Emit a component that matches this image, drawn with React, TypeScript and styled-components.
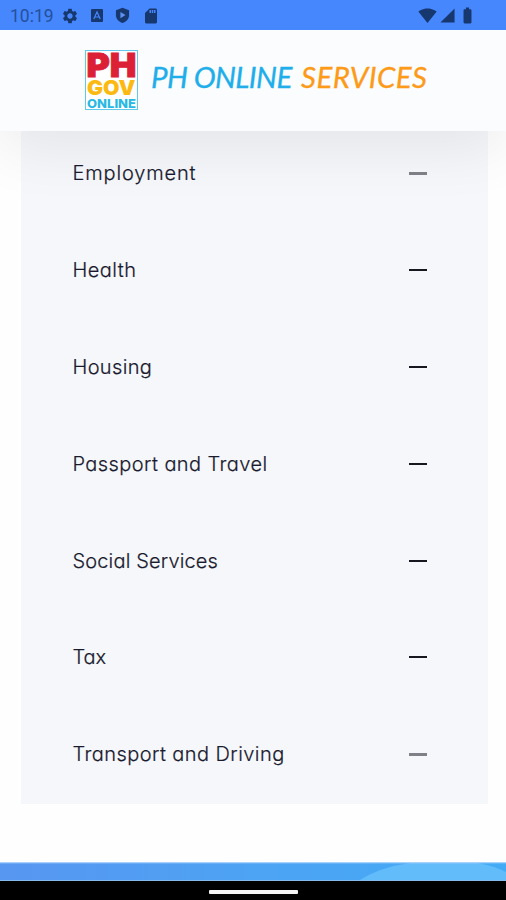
import React from "react";
import styled, { createGlobalStyle } from "styled-components";
import {
  MdSettings,
  MdSdCard,
  MdSignalCellular4Bar,
  MdBatteryFull,
  MdSignalWifi4Bar,
} from "react-icons/md";

const GlobalStyle = createGlobalStyle`
  * { box-sizing: border-box; }
  body { margin: 0; background: #fff; }
`;

const Screen = styled.div`
  display: flex;
  flex-direction: column;
  width: 506px;
  height: 900px;
  overflow: hidden;
  background: #fefefe;
  font-family: Inter, "Liberation Sans", sans-serif;
`;

const StatusBar = styled.div`
  display: flex;
  flex: none;
  align-items: center;
  justify-content: space-between;
  height: 30px;
  padding: 1px 29px 0 10px;
  background: #4687fe;
  color: #17376f;
  z-index: 2;
`;

const StatusGroup = styled.div<{ $gap: number }>`
  display: flex;
  align-items: center;
  gap: ${(p) => p.$gap}px;
`;

const Clock = styled.span`
  width: 44px;
  margin-right: -5px;
  font: 400 17.5px/20px Roboto, sans-serif;
  color: #24509c;
  white-space: nowrap;
`;

const Header = styled.header`
  display: flex;
  flex: none;
  height: 101px;
  padding: 20px 0 0 84.5px;
  background: #fbfcfe;
  box-shadow: 0 18px 60px rgba(0, 0, 0, 0.075);
  z-index: 1;
`;

const Logo = styled.div`
  width: 53px;
  height: 60px;
  border: 1px solid #62c8ec;
  background: #fff;
`;

const LogoSvg = styled.svg`
  display: block;
  width: 51px;
  height: 58px;
  overflow: visible;
`;

const Title = styled.h1`
  display: flex;
  gap: 9px;
  margin: 7px 0 0 13.5px;
  font-family: Lato, sans-serif;
  font-size: 29.5px;
  line-height: 40px;
  font-style: italic;
  font-weight: 400;
  white-space: nowrap;
`;

const TitleWord = styled.span<{ $color: string; $width: number; $spacing: number }>`
  width: ${(p) => p.$width}px;
  color: ${(p) => p.$color};
  -webkit-text-stroke: 0.3px ${(p) => p.$color};
  letter-spacing: ${(p) => p.$spacing}px;
`;

const Main = styled.main`
  flex: 1;
  overflow: hidden;
`;

const ServiceList = styled.ul`
  width: 467px;
  height: 678.5px;
  margin: -6px 0 0 20.5px;
  padding: 0;
  list-style: none;
  background: #f5f7fb;
`;

const ServiceRow = styled.li`
  display: flex;
  align-items: center;
  justify-content: space-between;
  height: 96.8px;
  padding: 0 60.5px 0 52px;
`;

const Label = styled.span<{ $spacing: number }>`
  font-size: 20px;
  line-height: 30px;
  font-weight: 300;
  font-feature-settings: "cv11";
  -webkit-text-stroke: 0.2px #1a1a2e;
  letter-spacing: ${(p) => p.$spacing}px;
  color: #1a1a2e;
  white-space: nowrap;
`;

const Minus = styled.span<{ $soft?: boolean }>`
  width: 18px;
  height: ${(p) => (p.$soft ? 3 : 2)}px;
  background: ${(p) => (p.$soft ? "#808188" : "#17171f")};
`;

const FooterArt = styled.svg`
  display: block;
  flex: none;
  width: 506px;
  height: 19px;
`;

const NavBar = styled.div`
  display: flex;
  flex: none;
  align-items: center;
  justify-content: center;
  height: 19px;
  background: #000;
`;

const NavHandle = styled.div`
  width: 89px;
  height: 4px;
  margin-top: 2px;
  border-radius: 1px;
  background: #f4f4f4;
`;

const services = [
  { name: "Employment", spacing: 0.85, soft: true },
  { name: "Health", spacing: 0.45 },
  { name: "Housing", spacing: 0.35 },
  { name: "Passport and Travel", spacing: 0.42 },
  { name: "Social Services", spacing: 0.15 },
  { name: "Tax", spacing: -0.1 },
  { name: "Transport and Driving", spacing: 0.43, soft: true },
];

const LetterBadge = () => (
  <svg width="12" height="13" viewBox="0 0 12 13">
    <rect width="12" height="13" rx="1" fill="currentColor" />
    <path d="M2.8 10 6 3l3.2 7M4 8h4" fill="none" stroke="#4687fe" strokeWidth="1.2" />
  </svg>
);

const ShieldPlay = () => (
  <svg width="15" height="17" viewBox="0 0 16 17">
    <path d="M8 .3 1 2.8v5.4c0 3.9 2.9 6.9 7 8.3 4.1-1.4 7-4.4 7-8.3V2.8z" fill="currentColor" />
    <path d="M5.8 4.7v6.6L11.2 8z" fill="#5c93f4" />
  </svg>
);

export default function App() {
  return (
    <>
      <GlobalStyle />
      <Screen>
        <StatusBar>
          <StatusGroup $gap={12}>
            <Clock>10:19</Clock>
            <MdSettings size={18} />
            <LetterBadge />
            <ShieldPlay />
            <MdSdCard size={18} />
          </StatusGroup>
          <StatusGroup $gap={2}>
            <MdSignalWifi4Bar size={19} />
            <MdSignalCellular4Bar size={17} />
            <MdBatteryFull size={19} />
          </StatusGroup>
        </StatusBar>
        <Header>
          <Logo>
            <LogoSvg viewBox="0 0 51 58" fontFamily="Inter, sans-serif">
              <text x="0.5" y="26" fontSize="33" fontWeight="900" fill="#dc2036" stroke="#dc2036" strokeWidth="0.9" textLength="50" lengthAdjust="spacingAndGlyphs">PH</text>
              <text x="1" y="44.3" fontSize="20.5" fontWeight="900" fill="#fcb912" textLength="48.5" lengthAdjust="spacingAndGlyphs">GOV</text>
              <text x="1" y="56.5" fontSize="12" fontWeight="800" fill="#29b8e4" textLength="49" lengthAdjust="spacingAndGlyphs">ONLINE</text>
            </LogoSvg>
          </Logo>
          <Title>
            <TitleWord $color="#20aeeb" $width={141} $spacing={-0.6}>PH ONLINE</TitleWord>
            <TitleWord $color="#fd9a18" $width={128} $spacing={0.4}>SERVICES</TitleWord>
          </Title>
        </Header>
        <Main>
          <ServiceList>
            {services.map((s) => (
              <ServiceRow key={s.name}>
                <Label $spacing={s.spacing}>{s.name}</Label>
                <Minus $soft={s.soft} />
              </ServiceRow>
            ))}
          </ServiceList>
        </Main>
        <FooterArt viewBox="0 0 506 19">
          <defs>
            <linearGradient id="footerBlue">
              <stop offset="0" stopColor="#5796f1" />
              <stop offset="0.5" stopColor="#4da3f4" />
              <stop offset="1" stopColor="#43abf5" />
            </linearGradient>
          </defs>
          <rect y="0.5" width="506" height="18.5" fill="url(#footerBlue)" />
          <path d="M358 19Q380 5 410 1h68q16 3 28 9v9z" fill="#62bcfa" />
          <rect y="0.3" width="506" height="1" fill="#a9d2fb" />
          <rect y="18" width="506" height="1" fill="#86b9eb" />
        </FooterArt>
        <NavBar>
          <NavHandle />
        </NavBar>
      </Screen>
    </>
  );
}
